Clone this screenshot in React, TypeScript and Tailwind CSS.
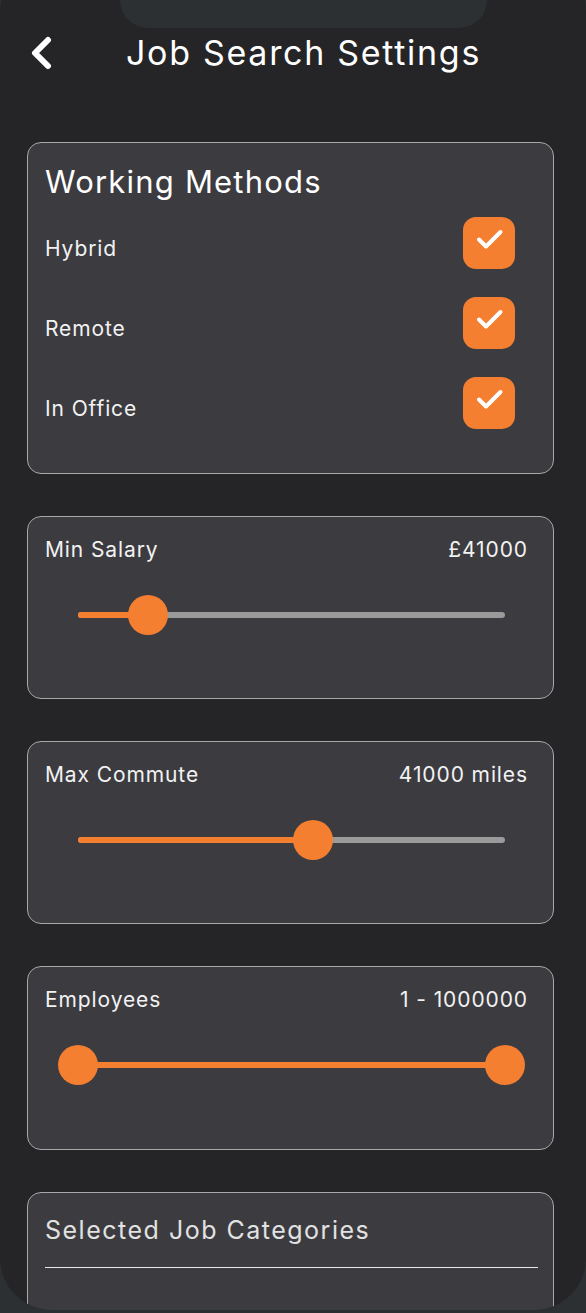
import React from "react";

const font = { fontFamily: "Inter, 'Noto Sans', sans-serif" };

function CheckBox() {
  return (
    <div className="flex h-[52px] w-[52px] items-center justify-center rounded-[13px] bg-[#f47f31]">
      <svg width="52" height="52" viewBox="0 0 52 52" fill="none">
        <polyline points="16,22.5 23,29.5 37.5,15" stroke="white" strokeWidth="4" strokeLinecap="round" strokeLinejoin="round" />
      </svg>
    </div>
  );
}

function Slider({ from, to, range }: { from: number; to: number; range?: boolean }) {
  return (
    <div className="relative mr-[48px] ml-[50px] h-[40px]">
      <div className="absolute top-[17px] right-0 left-0 h-[6px] rounded-full bg-[#9a9a9a]" />
      <div
        className="absolute top-[17px] h-[6px] rounded-full bg-[#f47f31]"
        style={{ left: `${from}%`, width: `${to - from}%` }}
      />
      {range && (
        <div
          className="absolute top-0 h-[40px] w-[40px] -translate-x-1/2 rounded-full bg-[#f47f31]"
          style={{ left: `${from}%` }}
        />
      )}
      <div
        className="absolute top-0 h-[40px] w-[40px] -translate-x-1/2 rounded-full bg-[#f47f31]"
        style={{ left: `${to}%` }}
      />
    </div>
  );
}

function SliderCard({
  label,
  value,
  from,
  to,
  range,
  tall,
}: {
  label: string;
  value: string;
  from: number;
  to: number;
  range?: boolean;
  tall?: boolean;
}) {
  return (
    <div
      className={
        tall
          ? "box-border h-[184px] rounded-[14px] border border-[#a8a8a8] bg-[#3c3b40] pt-[19px]"
          : "box-border h-[183px] rounded-[14px] border border-[#a8a8a8] bg-[#3c3b40] pt-[19px]"
      }
    >
      <div className="flex items-center justify-between pr-[25px] pl-[17px] text-[21px] leading-[28px] tracking-[0.9px] text-[#f2f2f2]">
        <span>{label}</span>
        <span>{value}</span>
      </div>
      <div className="mt-[31px]">
        <Slider from={from} to={to} range={range} />
      </div>
    </div>
  );
}

export default function App() {
  const methods = ["Hybrid", "Remote", "In Office"];
  return (
    <div className="h-[1313px] w-[586px] overflow-hidden bg-[#2c3033]" style={font}>
      <div className="relative -mt-[40px] h-[1350px] overflow-hidden rounded-[52px] bg-[#252527] pt-[40px]">
        <div className="absolute top-[40px] left-[120px] h-[28px] w-[367px] rounded-b-[28px] bg-[#2c3033]" />

        <div className="flex h-[106px] items-center pl-[29px]">
          <svg width="24" height="34" viewBox="0 0 24 34" fill="none">
            <polyline points="19,4 6,17 19,30" stroke="white" strokeWidth="6" strokeLinecap="round" strokeLinejoin="round" />
          </svg>
          <h1 className="ml-[73px] text-[34px] leading-[40px] font-normal tracking-[1.7px] text-white">Job Search Settings</h1>
        </div>

        <div className="flex flex-col gap-[42px] pt-[36px] pr-[32px] pl-[27px]">
          <div className="box-border h-[332px] rounded-[14px] border border-[#a8a8a8] bg-[#3c3b40] px-[17px] pt-[20px]">
            <h2 className="text-[31px] leading-[38px] tracking-[1.2px] text-white">Working Methods</h2>
            <div className="mt-[16px] flex flex-col gap-[28px]">
              {methods.map((m) => (
                <div key={m} className="flex items-center justify-between pr-[21px]">
                  <span className="pt-[11px] text-[21px] leading-[28px] tracking-[0.9px] text-[#f2f2f2]">{m}</span>
                  <CheckBox />
                </div>
              ))}
            </div>
          </div>

          <SliderCard label="Min Salary" value="£41000" from={0} to={16.4} />
          <SliderCard label="Max Commute" value="41000 miles" from={0} to={55} />
          <SliderCard label="Employees" value="1 - 1000000" from={0} to={100} range tall />

          <div className="box-border h-[200px] rounded-[14px] border border-[#a8a8a8] bg-[#3c3b40] pt-[21px] pr-[15px] pl-[17px]">
            <h2 className="text-[25px] leading-[32px] tracking-[1.5px] text-[#e2e2e2]">Selected Job Categories</h2>
            <div className="mt-[21px] h-px bg-[#e8e8e8]" />
          </div>
        </div>
      </div>
    </div>
  );
}
